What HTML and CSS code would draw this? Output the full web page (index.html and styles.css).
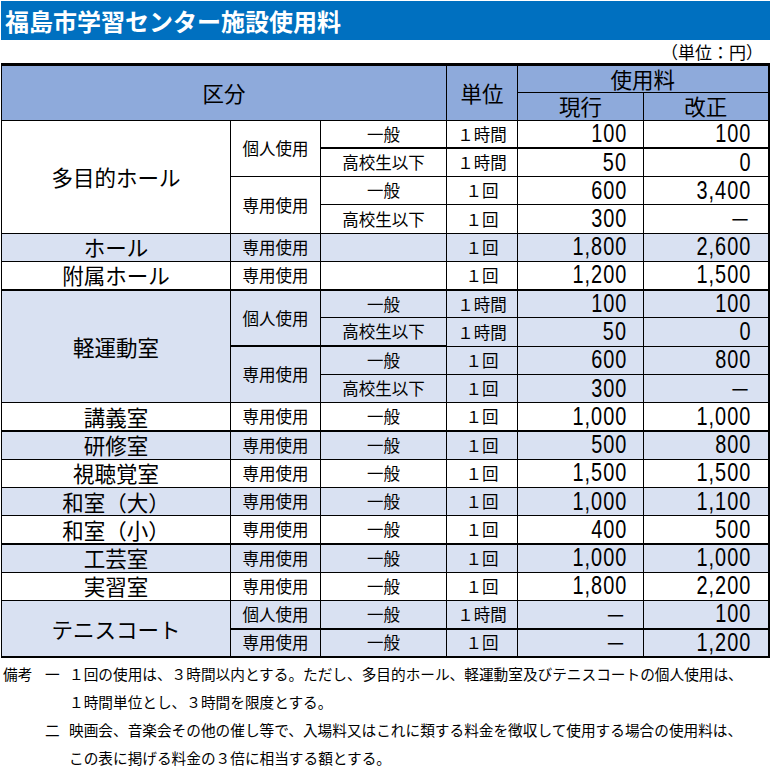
FILE: index.html
```html
<!DOCTYPE html>
<html lang="ja">
<head>
<meta charset="utf-8">
<title>福島市学習センター施設使用料</title>
<link rel="stylesheet" href="styles.css">
</head>
<body>
<div class="page">
  <h1 class="title">福島市学習センター施設使用料</h1>
  <p class="unit-note">（単位：円）</p>
  <table class="fees">
    <colgroup>
      <col class="c-name"><col class="c-use"><col class="c-who"><col class="c-unit"><col class="c-cur"><col class="c-new">
    </colgroup>
    <thead>
      <tr class="h1">
        <th rowspan="2" colspan="3">区分</th>
        <th rowspan="2">単位</th>
        <th colspan="2">使用料</th>
      </tr>
      <tr class="h2">
        <th>現行</th>
        <th>改正</th>
      </tr>
    </thead>
    <tbody>
      <tr>
        <td rowspan="4" class="name">多目的ホール</td>
        <td rowspan="2" class="use">個人使用</td>
        <td class="who">一般</td><td class="unit">１時間</td><td class="num"><span class="fig">100</span></td><td class="num"><span class="fig">100</span></td>
      </tr>
      <tr>
        <td class="who tk">高校生以下</td><td class="unit tk">１時間</td><td class="num tk"><span class="fig">50</span></td><td class="num tk"><span class="fig">0</span></td>
      </tr>
      <tr>
        <td rowspan="2" class="use">専用使用</td>
        <td class="who">一般</td><td class="unit">１回</td><td class="num"><span class="fig">600</span></td><td class="num"><span class="fig">3,400</span></td>
      </tr>
      <tr>
        <td class="who">高校生以下</td><td class="unit">１回</td><td class="num"><span class="fig">300</span></td><td class="num"><span class="dash">－</span></td>
      </tr>
      <tr class="alt">
        <td class="name">ホール</td><td class="use">専用使用</td><td class="who"></td><td class="unit">１回</td><td class="num"><span class="fig">1,800</span></td><td class="num"><span class="fig">2,600</span></td>
      </tr>
      <tr>
        <td class="name">附属ホール</td><td class="use">専用使用</td><td class="who"></td><td class="unit">１回</td><td class="num"><span class="fig">1,200</span></td><td class="num"><span class="fig">1,500</span></td>
      </tr>
      <tr class="alt">
        <td rowspan="4" class="name tk">軽運動室</td>
        <td rowspan="2" class="use tk">個人使用</td>
        <td class="who tk">一般</td><td class="unit tk">１時間</td><td class="num tk"><span class="fig">100</span></td><td class="num tk"><span class="fig">100</span></td>
      </tr>
      <tr class="alt">
        <td class="who">高校生以下</td><td class="unit">１時間</td><td class="num"><span class="fig">50</span></td><td class="num"><span class="fig">0</span></td>
      </tr>
      <tr class="alt">
        <td rowspan="2" class="use tk">専用使用</td>
        <td class="who tk">一般</td><td class="unit">１回</td><td class="num"><span class="fig">600</span></td><td class="num"><span class="fig">800</span></td>
      </tr>
      <tr class="alt">
        <td class="who">高校生以下</td><td class="unit">１回</td><td class="num"><span class="fig">300</span></td><td class="num"><span class="dash">－</span></td>
      </tr>
      <tr>
        <td class="name">講義室</td><td class="use">専用使用</td><td class="who">一般</td><td class="unit">１回</td><td class="num"><span class="fig">1,000</span></td><td class="num"><span class="fig">1,000</span></td>
      </tr>
      <tr class="alt">
        <td class="name tk">研修室</td><td class="use tk">専用使用</td><td class="who tk">一般</td><td class="unit tk">１回</td><td class="num tk"><span class="fig">500</span></td><td class="num tk"><span class="fig">800</span></td>
      </tr>
      <tr>
        <td class="name">視聴覚室</td><td class="use">専用使用</td><td class="who">一般</td><td class="unit">１回</td><td class="num"><span class="fig">1,500</span></td><td class="num"><span class="fig">1,500</span></td>
      </tr>
      <tr class="alt">
        <td class="name">和室（大）</td><td class="use">専用使用</td><td class="who">一般</td><td class="unit">１回</td><td class="num"><span class="fig">1,000</span></td><td class="num"><span class="fig">1,100</span></td>
      </tr>
      <tr>
        <td class="name">和室（小）</td><td class="use">専用使用</td><td class="who">一般</td><td class="unit">１回</td><td class="num"><span class="fig">400</span></td><td class="num"><span class="fig">500</span></td>
      </tr>
      <tr class="alt">
        <td class="name tk">工芸室</td><td class="use tk">専用使用</td><td class="who tk">一般</td><td class="unit tk">１回</td><td class="num tk"><span class="fig">1,000</span></td><td class="num tk"><span class="fig">1,000</span></td>
      </tr>
      <tr>
        <td class="name">実習室</td><td class="use">専用使用</td><td class="who">一般</td><td class="unit">１回</td><td class="num"><span class="fig">1,800</span></td><td class="num"><span class="fig">2,200</span></td>
      </tr>
      <tr class="alt">
        <td rowspan="2" class="name">テニスコート</td>
        <td class="use">個人使用</td><td class="who">一般</td><td class="unit">１時間</td><td class="num"><span class="dash">－</span></td><td class="num"><span class="fig">100</span></td>
      </tr>
      <tr class="alt">
        <td class="use tk">専用使用</td><td class="who tk">一般</td><td class="unit tk">１回</td><td class="num tk"><span class="dash">－</span></td><td class="num tk"><span class="fig">1,200</span></td>
      </tr>
    </tbody>
  </table>
  <div class="notes">
    <div class="note">
      <span class="note-label">備考</span>
      <span class="note-no">一</span>
      <span class="note-text">１回の使用は、３時間以内とする。ただし、多目的ホール、軽運動室及びテニスコートの個人使用は、１時間単位とし、３時間を限度とする。</span>
    </div>
    <div class="note">
      <span class="note-label"></span>
      <span class="note-no">二</span>
      <span class="note-text">映画会、音楽会その他の催し等で、入場料又はこれに類する料金を徴収して使用する場合の使用料は、この表に掲げる料金の３倍に相当する額とする。</span>
    </div>
  </div>
</div>
</body>
</html>
```
FILE: styles.css
```css
html, body {
  margin: 0;
  padding: 0;
  background: #fff;
}
body {
  font-family: "Noto Sans CJK JP", "Noto Sans", sans-serif;
  color: #000;
}
.page {
  padding: 1px 0 0 1px;
}
.title {
  margin: 0;
  height: 39px;
  line-height: 39px;
  background: #0070c0;
  color: #fff;
  font-size: 24px;
  font-weight: 700;
  padding-left: 4px;
}
.unit-note {
  margin: 0;
  height: 23px;
  line-height: 23px;
  font-size: 17px;
  text-align: right;
  padding-right: 7px;
}
.fees {
  border-collapse: collapse;
  table-layout: fixed;
  width: 767px;
  border-top: 3px solid #000;
  border-right: 2px solid #000;
  border-bottom: 2px solid #000;
  border-left: 1px solid #000;
}
.c-name { width: 229px; }
.c-use { width: 90px; }
.c-who { width: 126px; }
.c-unit { width: 71px; }
.c-cur { width: 126px; }
.c-new { width: 125px; }

.fees th,
.fees td {
  border: 1px solid #000;
  padding: 0;
  line-height: 1;
  text-align: center;
  vertical-align: middle;
  white-space: nowrap;
}
.fees th {
  background: #8eaadb;
  font-weight: 400;
  font-size: 21.5px;
}
.h1 { height: 27.5px; }
.h2 { height: 28px; }
.fees tbody tr { height: 28.26px; }
.fees tr.alt td { background: #d9e1f2; }
.fees td.tk { border-top-width: 2px; }
.fees tr:last-child td { border-bottom-width: 2px; }

.name { font-size: 21.5px; }
.use, .who, .unit { font-size: 16.5px; }
.fees td.num {
  text-align: right;
  padding-right: 17px;
}
.fig {
  display: inline-block;
  font-family: "Liberation Sans", Arial, sans-serif;
  font-size: 25.5px;
  letter-spacing: 1.3px;
  transform: scaleX(0.78);
  transform-origin: 100% 50%;
  margin-right: -1px;
}
.dash {
  display: inline-block;
  font-family: "Noto Sans CJK JP", sans-serif;
  font-size: 21px;
}

.notes {
  margin-top: 2px;
  padding-left: 2px;
  font-size: 14.67px;
  line-height: 28px;
}
.note {
  display: grid;
  grid-template-columns: 42px 24px 680px;
}
.note-no {
  text-align: left;
}
```
